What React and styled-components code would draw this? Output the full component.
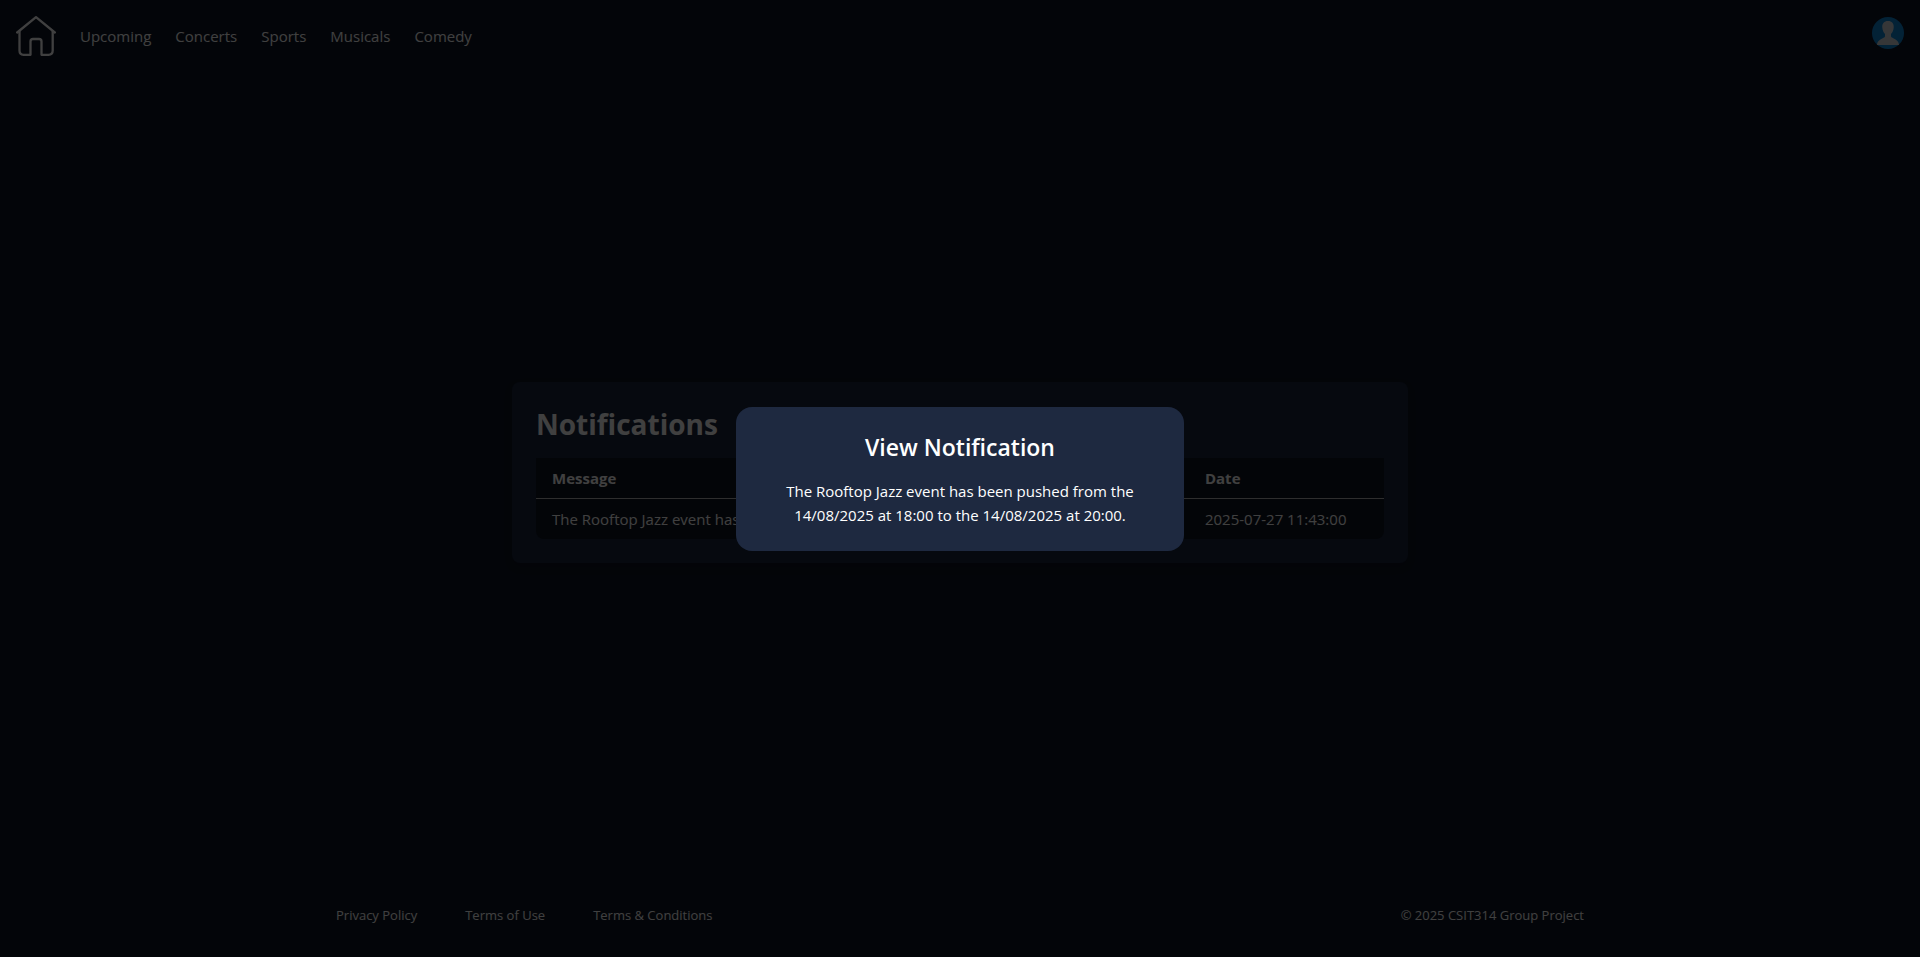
import React from "react";
import styled, { createGlobalStyle } from "styled-components";

const GlobalStyle = createGlobalStyle`
  *, *::before, *::after { box-sizing: border-box; }
  body {
    margin: 0;
    background: #0e1524;
    color: #ffffff;
    font-family: "Segoe UI", "Open Sans", "Noto Sans", sans-serif;
    font-size: 15px;
    line-height: 24px;
  }
  h1, h2, p { margin: 0; }
`;

const Page = styled.div`
  display: flex;
  flex-direction: column;
  min-height: 100vh;
`;

const Header = styled.header`
  display: flex;
  align-items: center;
  justify-content: space-between;
  padding: 16px;
`;

const Nav = styled.nav`
  display: flex;
  align-items: center;
  gap: 24px;
`;

const NavLink = styled.a`
  color: inherit;
  text-decoration: none;
`;

const HomeLink = styled.a`
  display: block;
  height: 40px;
  color: inherit;
`;

const AvatarButton = styled.button`
  align-self: flex-start;
  width: 32px;
  height: 32px;
  margin-top: 1px;
  padding: 0;
  border: 0;
  border-radius: 50%;
  background: none;
  cursor: pointer;
`;

const Main = styled.main`
  flex: 1;
  display: flex;
  align-items: center;
  justify-content: center;
  padding: 0 16px;
`;

const Card = styled.section`
  width: 100%;
  max-width: 896px;
  padding: 24px;
  border-radius: 8px;
  background: #18243c;
  box-shadow: 0 4px 8px rgba(0, 0, 0, 0.1);
`;

const CardTitle = styled.h1`
  margin-bottom: 16px;
  font-size: 28px;
  font-weight: 700;
  line-height: 36px;
`;

const Table = styled.table`
  width: 100%;
  border-collapse: separate;
  border-spacing: 0;
  table-layout: fixed;
  overflow: hidden;
  border-radius: 0 0 8px 8px;
  background: #0e1420;
  text-align: left;
`;

const HeadCell = styled.th`
  width: ${(p) => p.$width || "auto"};
  padding: 8px 16px;
  border-bottom: 1px solid #b8b8b8;
  font-weight: 700;
`;

const Cell = styled.td`
  padding: 8px 16px;
  white-space: nowrap;
`;

const Footer = styled.footer`
  font-size: 13px;
  line-height: 20px;
`;

const FooterInner = styled.div`
  display: flex;
  align-items: center;
  justify-content: space-between;
  max-width: 1280px;
  margin: 0 auto;
  padding: 32px 16px;
`;

const FooterLinks = styled.nav`
  display: flex;
  gap: 48px;
`;

const Backdrop = styled.div`
  position: fixed;
  inset: 0;
  display: flex;
  align-items: center;
  justify-content: center;
  padding: 16px;
  background: rgba(0, 0, 0, 0.75);
`;

const Dialog = styled.div`
  width: 100%;
  max-width: 448px;
  padding: 24px;
  border-radius: 16px;
  background: #1e2940;
  text-align: center;
`;

const DialogTitle = styled.h2`
  margin-bottom: 16px;
  font-size: 23px;
  font-weight: 600;
  line-height: 32px;
`;

const DialogText = styled.p`
  padding: 0 16px;
`;

const HomeIcon = () => (
  <svg width="40" height="40" viewBox="0 0 40 40" fill="none" stroke="currentColor" strokeWidth="2.3" strokeLinecap="round" strokeLinejoin="round" aria-hidden="true">
    <path d="M1.200 16.500 L20 1.200 L38.800 16.500" />
    <path d="M3.500 15.500 V34.500 Q3.500 38.800 7.500 38.800 H14.500 V25.500 Q14.500 23 17 23 H23 Q25.500 23 25.500 25.500 V38.800 H32.500 Q36.700 38.800 36.700 34.500 V15.500" />
  </svg>
);

const AvatarIcon = () => (
  <svg width="32" height="32" viewBox="0 0 32 32" display="block" aria-hidden="true">
    <circle cx="16" cy="16" r="16" fill="#0c88d8" />
    <path d="M16 4 C12.200 4 10 6.400 10.300 10.500 C10.500 13.500 11.500 15.500 13 17 V19.500 C12.500 21.500 5 22 5 28 H27 C27 22 19.500 21.500 19 19.500 V17 C20.500 15.500 21.500 13.500 21.700 10.500 C22 6.400 19.800 4 16 4 Z" fill="#d8dcdf" />
  </svg>
);

const PREVIEW_LENGTH = 32;

const preview = (text) =>
  text.length > PREVIEW_LENGTH ? `${text.slice(0, PREVIEW_LENGTH).trimEnd()}...` : text;

const categories = ["Upcoming", "Concerts", "Sports", "Musicals", "Comedy"];
const legalLinks = ["Privacy Policy", "Terms of Use", "Terms & Conditions"];
const message =
  "The Rooftop Jazz event has been pushed from the 14/08/2025 at 18:00 to the 14/08/2025 at 20:00.";

export default function App() {
  return (
    <>
      <GlobalStyle />
      <Page>
        <Header>
          <Nav aria-label="Main">
            <HomeLink href="#home" aria-label="Home">
              <HomeIcon />
            </HomeLink>
            {categories.map((name) => (
              <NavLink key={name} href={`#${name.toLowerCase()}`}>
                {name}
              </NavLink>
            ))}
          </Nav>
          <AvatarButton type="button" aria-label="Account">
            <AvatarIcon />
          </AvatarButton>
        </Header>
        <Main>
          <Card>
            <CardTitle>Notifications</CardTitle>
            <Table>
              <thead>
                <tr>
                  <HeadCell scope="col" $width="77%">Message</HeadCell>
                  <HeadCell scope="col">Date</HeadCell>
                </tr>
              </thead>
              <tbody>
                <tr>
                  <Cell>{preview(message)}</Cell>
                  <Cell>2025-07-27 11:43:00</Cell>
                </tr>
              </tbody>
            </Table>
          </Card>
        </Main>
        <Footer>
          <FooterInner>
            <FooterLinks aria-label="Legal">
              {legalLinks.map((name) => (
                <NavLink key={name} href="#legal">
                  {name}
                </NavLink>
              ))}
            </FooterLinks>
            <span>© 2025 CSIT314 Group Project</span>
          </FooterInner>
        </Footer>
      </Page>
      <Backdrop>
        <Dialog role="dialog" aria-modal="true" aria-labelledby="dialog-title">
          <DialogTitle id="dialog-title">View Notification</DialogTitle>
          <DialogText>{message}</DialogText>
        </Dialog>
      </Backdrop>
    </>
  );
}
